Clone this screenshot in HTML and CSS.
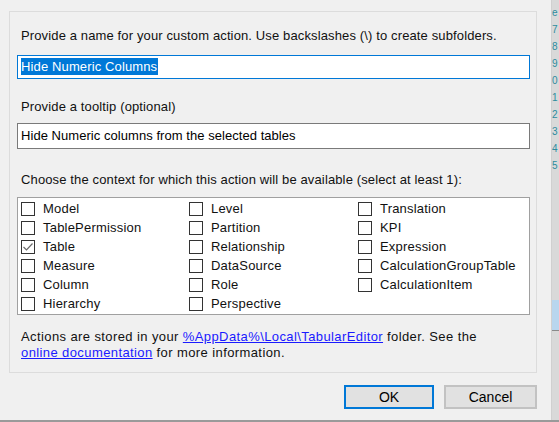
FILE: index.html
```html
<!DOCTYPE html>
<html>
<head>
<meta charset="utf-8">
<link rel="stylesheet" href="styles.css">
</head>
<body>
<div class="screen">
  <div class="dialog">
    <div class="panel">
      <div class="label l1">Provide a name for your custom action. Use backslashes (\) to create subfolders.</div>
      <div class="input focused i1"><span class="sel">Hide Numeric Columns</span></div>
      <div class="label l2">Provide a tooltip (optional)</div>
      <div class="input i2">Hide Numeric columns from the selected tables</div>
      <div class="label l3">Choose the context for which this action will be available (select at least 1):</div>
      <div class="checklist">
        <div class="item"><span class="box"></span>Model</div>
        <div class="item"><span class="box"></span>TablePermission</div>
        <div class="item"><span class="box"><svg width="12" height="12" viewBox="0 0 12 12"><polyline points="1.5,6 4.5,9 10.5,2.5" fill="none" stroke="#6a6a6a" stroke-width="1.2"/></svg></span>Table</div>
        <div class="item"><span class="box"></span>Measure</div>
        <div class="item"><span class="box"></span>Column</div>
        <div class="item"><span class="box"></span>Hierarchy</div>
        <div class="item"><span class="box"></span>Level</div>
        <div class="item"><span class="box"></span>Partition</div>
        <div class="item"><span class="box"></span>Relationship</div>
        <div class="item"><span class="box"></span>DataSource</div>
        <div class="item"><span class="box"></span>Role</div>
        <div class="item"><span class="box"></span>Perspective</div>
        <div class="item"><span class="box"></span>Translation</div>
        <div class="item"><span class="box"></span>KPI</div>
        <div class="item"><span class="box"></span>Expression</div>
        <div class="item"><span class="box"></span>CalculationGroupTable</div>
        <div class="item"><span class="box"></span>CalculationItem</div>
      </div>
      <div class="footer">Actions are stored in your <a class="link">%AppData%\Local\TabularEditor</a> folder. See the<br><a class="link">online documentation</a> for more information.</div>
    </div>
    <div class="buttons">
      <div class="btn default">OK</div>
      <div class="btn">Cancel</div>
    </div>
  </div>
  <div class="side">
    <div class="digits">e<br>7<br>8<br>9<br>0<br>1<br>2<br>3<br>4<br>5</div>
    <div class="selrow"></div>
  </div>
</div>
</body>
</html>
```
FILE: styles.css
```css
html, body {
  margin: 0;
  padding: 0;
}
body {
  width: 559px;
  height: 422px;
  overflow: hidden;
  background: #e4e4e4;
  font-family: "Liberation Sans", Arial, sans-serif;
  font-size: 13px;
  letter-spacing: 0.13px;
  color: #000;
}
.screen {
  display: flex;
  height: 420px;
  border-bottom: 2px solid #9a9a9a;
}
.dialog {
  width: 552px;
  height: 420px;
  box-sizing: border-box;
  background: #f0f0f0;
  border-right: 1px solid #d0d0d0;
  padding: 11px 0 0 9px;
}
.panel {
  width: 528px;
  height: 362px;
  box-sizing: border-box;
  border: 1px solid #dcdcdc;
  padding: 17px 0 0 7px;
  display: flex;
  flex-direction: column;
}
.label {
  line-height: 14px;
  height: 14px;
  margin-left: 4px;
  white-space: nowrap;
  color: #111;
}
.l2 { margin-top: 21px; }
.l3 { margin-top: 24px; }
.input {
  width: 513px;
  box-sizing: border-box;
  background: #fff;
  border: 1px solid #7a7a7a;
  white-space: nowrap;
  padding-left: 3px;
}
.i1 {
  margin-top: 12px;
  height: 24px;
  padding-top: 2px;
  border-color: #0078d7;
}
.sel {
  display: inline-block;
  background: #0078d7;
  color: #fff;
  line-height: 17px;
  padding-right: 1px;
}
.i2 {
  margin-top: 9px;
  height: 26px;
  line-height: 24px;
  letter-spacing: 0.05px;
}
.checklist {
  margin-top: 10px;
  width: 513px;
  height: 118px;
  box-sizing: border-box;
  background: #fff;
  border: 1px solid #a0a0a0;
  padding: 1px 0 0 3px;
  display: grid;
  grid-auto-flow: column;
  grid-template-rows: repeat(6, 19px);
  grid-template-columns: 168px 169px 169px;
}
.item {
  display: flex;
  align-items: center;
  gap: 8px;
  white-space: nowrap;
  color: #111;
  letter-spacing: 0.2px;
}
.box {
  width: 14px;
  height: 14px;
  box-sizing: border-box;
  border: 1px solid #333;
  background: #fff;
  display: flex;
  align-items: center;
  justify-content: center;
  flex: none;
}
.footer {
  margin-top: 14px;
  margin-left: 4px;
  line-height: 16px;
  white-space: nowrap;
  color: #111;
  letter-spacing: 0.4px;
}
.link {
  color: #1a1aff;
  text-decoration: underline;
}
.buttons {
  width: 528px;
  margin-top: 12px;
  display: flex;
  justify-content: flex-end;
  gap: 10px;
}
.btn {
  width: 93px;
  height: 24px;
  box-sizing: border-box;
  background: #e1e1e1;
  border: 2px solid #c2c2c2;
  display: flex;
  align-items: center;
  justify-content: center;
  font-size: 14px;
  letter-spacing: 0;
}
.btn.default {
  width: 90px;
  border-color: #0078d7;
}
.side {
  flex: 1;
  position: relative;
  overflow: hidden;
  background: #d9d9d9;
}
.digits {
  position: absolute;
  left: 0;
  top: 4px;
  color: #2d8c9e;
  font-size: 10px;
  line-height: 17px;
  letter-spacing: 0;
}
.selrow {
  position: absolute;
  left: 0;
  top: 300px;
  width: 10px;
  height: 30px;
  background: #b9d6ee;
  border-bottom: 1px solid #8a8a8a;
}
```
